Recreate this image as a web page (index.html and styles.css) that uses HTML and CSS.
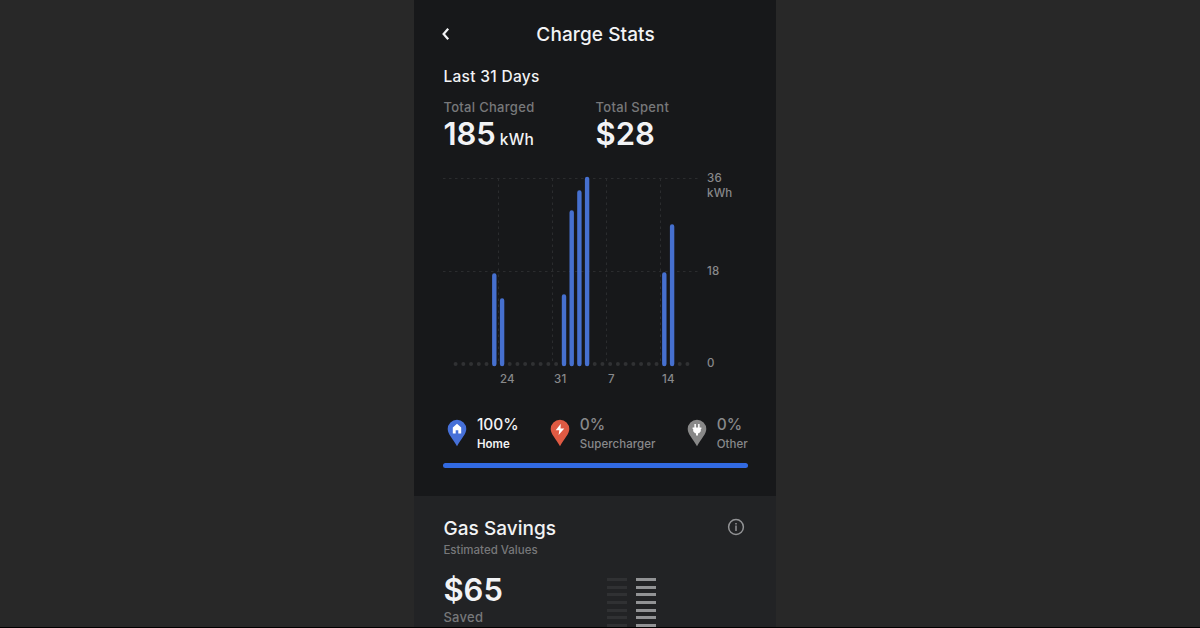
FILE: index.html
```html
<!DOCTYPE html>
<html lang="en">
<head>
<meta charset="utf-8">
<title>Charge Stats</title>
<link rel="stylesheet" href="styles.css">
</head>

<body>
<div class="phone">
	<div class="charge">
		<div class="header">
			<svg class="back" width="10" height="16" viewBox="0 0 10 16"><path d="M7.2 2.700 2.600 8l4.600 5.300" /></svg>
			<h1>Charge Stats</h1>
		</div>
		<h2 class="period">Last 31 Days</h2>
		<div class="totals">
			<div class="total">
				<p class="label">Total Charged</p>
				<p class="value">185<span class="unit">kWh</span></p>
			</div>
			<div class="total">
				<p class="label">Total Spent</p>
				<p class="value">$28</p>
			</div>
		</div>
		<svg class="chart" width="320" height="220" viewBox="0 0 320 220">
			<!-- grid -->
			<path class="grid" d="M0 8.5H258M0 101.5H258M55.5 8.5V194M109.5 8.5V194M163.5 8.5V194M217.5 8.5V194" />
			<!-- days without charging -->
			<path class="dots" d="M12.6 194H45M66.7 194H114M151.7 194H214M236.7 194H246" />
			<!-- days with charging -->
			<path class="bars" d="M51.3 105.5V194M59.1 130.5V194M121 126.5V194M128.7 42.5V194M136.4 22.5V194M144.1 9V194M221.3 104.5V194M229.1 56.5V194" />
			<g class="axis">
				<text x="264" y="12">36</text>
				<text x="264" y="27">kWh</text>
				<text x="264" y="105">18</text>
				<text x="264" y="197">0</text>
				<text x="57" y="213">24</text>
				<text x="111" y="213">31</text>
				<text x="165" y="213">7</text>
				<text x="219" y="213">14</text>
			</g>
		</svg>
		<div class="sources">
			<div class="source home">
				<svg class="pin" width="20" height="28" viewBox="0 0 20 28">
					<path class="drop" d="M10 .7a9.300 9.300 0 0 1 9.300 9.300c0 5-5 9.600-9.300 17.200C5.700 19.600.7 15 .7 10A9.300 9.300 0 0 1 10 .7z" />
					<path class="glyph" d="M10 4.800 14.200 8.400V14.400H11.300V11.300H8.700V14.400H5.800V8.400z" />
				</svg>
				<div><p class="percent">100%</p><p class="name">Home</p></div>
			</div>
			<div class="source super">
				<svg class="pin" width="20" height="28" viewBox="0 0 20 28">
					<path class="drop" d="M10 .7a9.300 9.300 0 0 1 9.300 9.300c0 5-5 9.600-9.300 17.200C5.700 19.600.7 15 .7 10A9.300 9.300 0 0 1 10 .7z" />
					<path class="glyph" d="M10.800 4.800 5.700 11.300H9.300L8.600 16 14.300 9.400H10.500z" />
				</svg>
				<div><p class="percent">0%</p><p class="name">Supercharger</p></div>
			</div>
			<div class="source other">
				<svg class="pin" width="20" height="28" viewBox="0 0 20 28">
					<path class="drop" d="M10 .7a9.300 9.300 0 0 1 9.300 9.300c0 5-5 9.600-9.300 17.200C5.700 19.600.7 15 .7 10A9.300 9.300 0 0 1 10 .7z" />
					<path class="glyph" d="M7.400 5H8.900V8.500H11.100V5H12.600V8.500H14.400V10H13.800V12.300L12 14.300H11V16.500H9V14.300H8L6.200 12.300V10H5.600V8.500H7.400z" />
				</svg>
				<div><p class="percent">0%</p><p class="name">Other</p></div>
			</div>
		</div>
		<div class="share"></div>
	</div>
	<div class="savings">
		<div class="savings-text">
			<h2>Gas Savings</h2>
			<p class="note">Estimated Values</p>
			<p class="value">$65</p>
			<p class="label">Saved</p>
		</div>
		<div class="stacks">
			<div class="stack dim"></div>
			<div class="stack"></div>
		</div>
		<svg class="info" width="18" height="18" viewBox="0 0 18 18">
			<circle cx="9" cy="9" r="7.400" />
			<path d="M9 5V6.400M9 7.600V13" />
		</svg>
	</div>
</div>
</body>
</html>
```
FILE: styles.css
```css
body{
    margin:0;
    height:627px;
    overflow:hidden;
    background:#282828;
    border-bottom:1px solid #000;
    font-family:Inter, "Liberation Sans", sans-serif;
    font-weight:500;
    color:#f2f3f5;
}
html{overflow:hidden;}
h1, h2, p{
    margin:0;
    font-weight:500;
    white-space:nowrap;
}
svg{display:block;}
.phone{
    width:362px;
    height:627px;
    margin-left:414.4px;
    overflow:hidden;
    background:#222325;
}
.charge{
    box-sizing:border-box;
    height:496px;
    padding:20px 28.6px 0 29px;
    background:#17181a;
}
.header{
    display:flex;
    height:28px;
    align-items:center;
}
.header h1{
    flex:1;
    padding-right:8px;
    text-align:center;
    font-size:19px;
    letter-spacing:.1px;
}
.back{margin-left:-2px;}
.back path{
    fill:none;
    stroke:#f2f3f5;
    stroke-width:2.2;
}
.period{
    margin-top:19px;
    font-size:15.5px;
    line-height:20px;
    letter-spacing:.3px;
}
.totals{
    display:flex;
    margin-top:12px;
}
.total{width:152.5px;}
.label{
    font-size:13px;
    line-height:16px;
    letter-spacing:.3px;
    color:#77787a;
}
.value{
    margin-top:1px;
    font-size:31px;
    line-height:36px;
    font-weight:600;
}
.unit{
    margin-left:4px;
    font-size:15.5px;
    font-weight:500;
    letter-spacing:.2px;
}
.chart{
    margin-top:12px;
    margin-left:-.4px;
    overflow:visible;
}
.grid{
    fill:none;
    stroke:#2b2c2e;
    stroke-dasharray:2.5 3.5;
}
.dots{
    fill:none;
    stroke:#303133;
    stroke-width:4;
    stroke-linecap:round;
    stroke-dasharray:0 7.73;
}
.bars{
    fill:none;
    stroke:#4670cf;
    stroke-width:4.4;
    stroke-linecap:round;
}
.axis{
    fill:#88898b;
    font-size:11.5px;
    letter-spacing:.2px;
}
.sources{
    display:flex;
    justify-content:space-between;
    margin-top:25px;
    padding-left:4px;
}
.source{
    display:flex;
    gap:9.5px;
    color:#88898b;
}
.pin{margin-top:4px;}
.glyph{fill:#fff;}
.home{color:#f2f3f5;}
.home .drop{fill:#4670d8;}
.super .drop{fill:#df5a43;}
.other .drop{fill:#888;}
.percent{
    font-size:15.5px;
    line-height:20px;
}
.name{
    font-size:11.5px;
    line-height:18px;
    letter-spacing:.05px;
}
.home .name{font-weight:600;}
.share{
    height:5px;
    margin-top:10px;
    border-radius:3px;
    background:#326ae2;
}
.savings{
    display:flex;
    padding:19px 31px 0 29px;
}
.savings-text{width:164px;}
.savings h2{
    font-size:19px;
    line-height:27px;
    letter-spacing:.05px;
}
.note{
    margin-top:-1px;
    font-size:11.5px;
    line-height:18px;
    color:#77787a;
}
.savings .value{margin-top:13px;}
.savings .label{margin-top:1px;}
.stacks{
    display:flex;
    gap:9px;
    flex:1;
    padding-top:63px;
}
.stack{
    width:20px;
    height:54px;
    background:repeating-linear-gradient(#929395 0 3px, transparent 3px 7.700px);
}
.stack.dim{background:repeating-linear-gradient(#303133 0 3px, transparent 3px 7.700px);}
.info{margin-top:3px;}
.info circle, .info path{
    fill:none;
    stroke:#929395;
    stroke-width:1.5;
}
```
